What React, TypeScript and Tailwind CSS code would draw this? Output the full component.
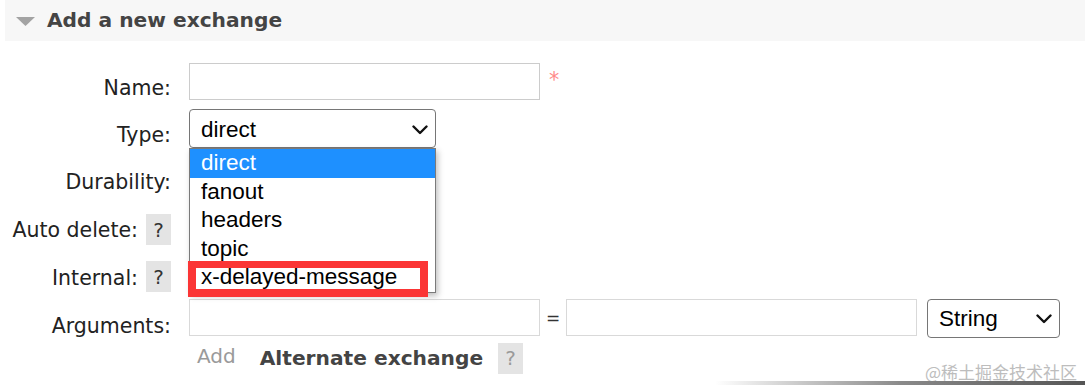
import React from "react";

const Chevron = () => (
  <svg width="16" height="10" viewBox="0 0 16 10" fill="none">
    <path d="M1.5 1.5 L8 8 L14.5 1.5" stroke="#111" strokeWidth="2.4" strokeLinecap="round" strokeLinejoin="round" />
  </svg>
);

const Help = ({ muted }: { muted?: boolean }) => (
  <div
    className={`w-[25px] h-[31px] bg-[#e4e4e4] flex items-center justify-center text-[20px] leading-none ${
      muted ? "text-[#9a9a9a]" : "text-[#333]"
    }`}
  >
    ?
  </div>
);

export default function App() {
  const options = ["direct", "fanout", "headers", "topic", "x-delayed-message"];
  return (
    <div className="relative w-[1085px] h-[385px] bg-white overflow-hidden font-['DejaVu_Sans',Verdana,sans-serif] text-[#222]">
      {/* header */}
      <div className="ml-[5px] h-[41px] bg-[#f7f7f7] flex items-center">
        <svg width="19" height="9" viewBox="0 0 19 9" className="ml-[11px] mt-[2px]">
          <path d="M0 0 H19 L9.5 9 Z" fill="#a3a3a3" />
        </svg>
        <div className="ml-[12px] text-[20.2px] font-bold text-[#444] leading-none">Add a new exchange</div>
      </div>

      {/* form */}
      <div className="mt-[22px] flex flex-col text-[20.5px] leading-[24px]">
        {/* Name */}
        <div className="flex h-[46px]">
          <div className="w-[171px] text-right pt-[13px]">Name:</div>
          <div className="ml-[18px] w-[351px] h-[37px] border border-[#cccccc] bg-white" />
          <div className="ml-[9px] pt-[5px] text-[#ff8a8a]">*</div>
        </div>

        {/* Type */}
        <div className="flex h-[47.5px]">
          <div className="w-[171px] text-right pt-[13.5px]">Type:</div>
          <div className="relative ml-[18px] w-[247px] h-[39px] z-10">
            <div className="w-full h-full border border-[#767676] rounded-[4px] bg-white flex items-center justify-between pl-[11px] pr-[7px] pt-[2px] font-['Liberation_Sans',Arial,sans-serif] text-[22.5px] text-black">
              <span>direct</span>
              <Chevron />
            </div>
            {/* open dropdown list */}
            <div className="absolute left-0 top-full w-full border border-[#7a7a7a] bg-white shadow-[2px_3px_6px_rgba(0,0,0,0.25)] font-['Liberation_Sans',Arial,sans-serif] text-[22.5px] text-black">
              {options.map((o, i) => (
                <div
                  key={o}
                  className={`h-[28.5px] flex items-center pl-[11px] leading-none ${
                    i === 0 ? "bg-[#1e90ff] text-white" : ""
                  }`}
                >
                  {o}
                </div>
              ))}
              <div className="absolute left-[-2px] top-[112px] w-[240px] h-[36px] border-[8px] border-t-[7px] border-[#fb3535]" />
            </div>
          </div>
        </div>

        {/* Durability */}
        <div className="flex h-[47.5px]">
          <div className="w-[171px] text-right pt-[13.5px]">Durability:</div>
        </div>

        {/* Auto delete */}
        <div className="flex h-[47.5px]">
          <div className="w-[171px] flex justify-end items-start">
            <div className="pt-[14px]">Auto delete:</div>
            <div className="ml-[8px] mt-[10px]">
              <Help />
            </div>
          </div>
        </div>

        {/* Internal */}
        <div className="flex h-[47.5px]">
          <div className="w-[171px] flex justify-end items-start">
            <div className="pt-[14px]">Internal:</div>
            <div className="ml-[8px] mt-[9.5px]">
              <Help />
            </div>
          </div>
        </div>

        {/* Arguments */}
        <div className="flex h-[43px]">
          <div className="w-[171px] text-right pt-[14.5px]">Arguments:</div>
          <div className="ml-[18px] w-[351px] h-[37px] border border-[#d9d9d9] bg-white" />
          <div className="w-[26px] text-center pt-[7px] text-[17px] text-[#333]">=</div>
          <div className="w-[351px] h-[37px] border border-[#d9d9d9] bg-white" />
          <div className="ml-[10px] w-[133px] h-[39px] border border-[#767676] rounded-[4px] bg-white flex items-center justify-between pl-[11px] pr-[7px] pt-[1px] font-['Liberation_Sans',Arial,sans-serif] text-[22.5px] text-black">
            <span>String</span>
            <Chevron />
          </div>
        </div>

        {/* Add / Alternate exchange */}
        <div className="flex items-center h-[32px]">
          <div className="ml-[197px] text-[20px] text-[#9a9a9a] -mt-[4px]">Add</div>
          <div className="ml-[24px] text-[20.2px] font-bold text-[#444]">Alternate exchange</div>
          <div className="ml-[15px]">
            <Help muted />
          </div>
        </div>
      </div>

      {/* watermark */}
      <div className="absolute right-[8px] bottom-[3px] text-[17px] leading-[20px] text-[#bdbdbd] font-['Noto_Sans_CJK_SC','Noto_Sans',sans-serif]">
        @稀土掘金技术社区
      </div>
      {/* bottom shadow edge */}
      <div className="absolute right-0 bottom-0 w-[370px] h-[4px] bg-gradient-to-r from-[rgba(90,90,90,0)] via-[#8a8a8a] to-[#555]" />
    </div>
  );
}
